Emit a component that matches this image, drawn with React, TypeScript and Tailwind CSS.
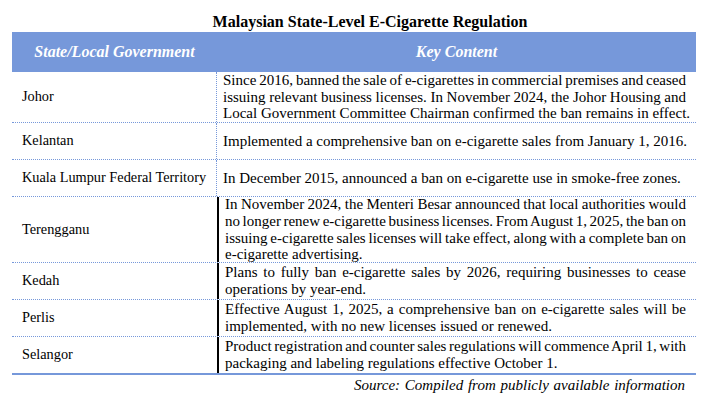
const rows = [
  {
    state: "Johor",
    h: "h-[51px]",
    solid: false,
    lines: [
      "Since 2016, banned the sale of e-cigarettes in commercial premises and ceased",
      "issuing relevant business licenses. In November 2024, the Johor Housing and",
      "Local Government Committee Chairman confirmed the ban remains in effect.",
    ],
  },
  {
    state: "Kelantan",
    h: "h-[37px]",
    solid: false,
    lines: ["Implemented a comprehensive ban on e-cigarette sales from January 1, 2016."],
  },
  {
    state: "Kuala Lumpur Federal Territory",
    h: "h-[37px]",
    solid: false,
    lines: ["In December 2015, announced a ban on e-cigarette use in smoke-free zones."],
  },
  {
    state: "Terengganu",
    h: "h-[66px]",
    solid: true,
    lines: [
      "In November 2024, the Menteri Besar announced that local authorities would",
      "no longer renew e-cigarette business licenses. From August 1, 2025, the ban on",
      "issuing e-cigarette sales licenses will take effect, along with a complete ban on",
      "e-cigarette advertising.",
    ],
  },
  {
    state: "Kedah",
    h: "h-[37px]",
    solid: true,
    lines: [
      "Plans to fully ban e-cigarette sales by 2026, requiring businesses to cease",
      "operations by year-end.",
    ],
  },
  {
    state: "Perlis",
    h: "h-[37px]",
    solid: true,
    lines: [
      "Effective August 1, 2025, a comprehensive ban on e-cigarette sales will be",
      "implemented, with no new licenses issued or renewed.",
    ],
  },
  {
    state: "Selangor",
    h: "h-[38px]",
    solid: true,
    lines: [
      "Product registration and counter sales regulations will commence April 1, with",
      "packaging and labeling regulations effective October 1.",
    ],
  },
];

export default function App() {
  return (
    <div className="h-[400px] w-[710px] bg-white pl-[12px] pr-[14px] pt-[12px] text-[15px] text-black [font-family:'Liberation_Serif',serif]">
      <h1 className="pl-[32px] text-center text-[16px] font-bold leading-[20px]">
        Malaysian State-Level E-Cigarette Regulation
      </h1>

      {/* Header */}
      <div className="flex h-[40px] items-center bg-[#7698da] text-[16px] font-bold italic text-white">
        <div className="w-[205px] shrink-0 text-center">State/Local Government</div>
        <div className="min-w-0 flex-1 text-center">Key Content</div>
      </div>

      {/* Rows */}
      {rows.map((r, i) => (
        <div
          key={r.state}
          className={`flex ${r.h} ${
            i === rows.length - 1
              ? "border-b-2 border-solid border-[#7698da]"
              : "border-b border-dotted border-[#7698da]"
          }`}
        >
          <div
            className={`flex w-[205px] shrink-0 items-center whitespace-nowrap pl-[10px] text-[14.3px] ${
              r.solid ? "" : "border-r border-dotted border-[#7698da]"
            }`}
          >
            {r.state}
          </div>
          <div
            className={`flex min-w-0 flex-1 flex-col justify-center pl-[6px] pr-[10px] ${
              r.lines.length === 2 ? "leading-[17.5px]" : "leading-[16.8px]"
            } ${r.solid ? "border-l-2 border-solid border-black" : ""}`}
          >
            {r.lines.map((l, j) => (
              <div
                key={j}
                className={
                  j < r.lines.length - 1
                    ? "whitespace-nowrap text-justify [text-align-last:justify] [word-spacing:-1.5px]"
                    : "whitespace-nowrap"
                }
              >
                {l}
              </div>
            ))}
          </div>
        </div>
      ))}

      <div className="flex justify-end pr-[11px] pt-[1px]">
        <div className="w-[331px] whitespace-nowrap text-justify italic leading-[18px] [text-align-last:justify]">
          Source: Compiled from publicly available information
        </div>
      </div>
    </div>
  );
}
